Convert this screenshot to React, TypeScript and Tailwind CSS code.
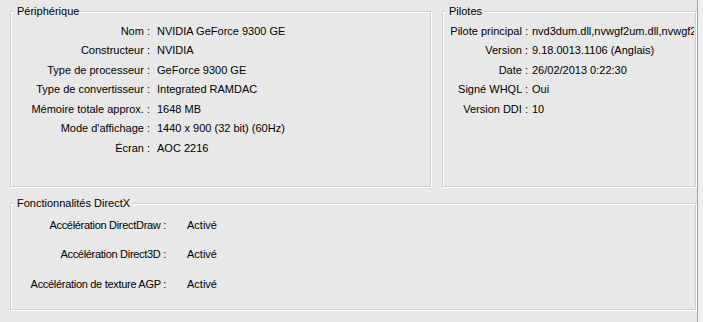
type Row = { label: string; value: string };

const device: Row[] = [
  { label: "Nom", value: "NVIDIA GeForce 9300 GE" },
  { label: "Constructeur", value: "NVIDIA" },
  { label: "Type de processeur", value: "GeForce 9300 GE" },
  { label: "Type de convertisseur", value: "Integrated RAMDAC" },
  { label: "Mémoire totale approx.", value: "1648 MB" },
  { label: "Mode d'affichage", value: "1440 x 900 (32 bit) (60Hz)" },
  { label: "Écran", value: "AOC 2216" },
];

const drivers: Row[] = [
  { label: "Pilote principal", value: "nvd3dum.dll,nvwgf2um.dll,nvwgf2um.dll" },
  { label: "Version", value: "9.18.0013.1106 (Anglais)" },
  { label: "Date", value: "26/02/2013 0:22:30" },
  { label: "Signé WHQL", value: "Oui" },
  { label: "Version DDI", value: "10" },
];

const directx: Row[] = [
  { label: "Accélération DirectDraw", value: "Activé" },
  { label: "Accélération Direct3D", value: "Activé" },
  { label: "Accélération de texture AGP", value: "Activé" },
];

function GroupBox({ title, className, children }: { title: string; className: string; children?: React.ReactNode }) {
  return (
    <div
      className={`relative shrink-0 border border-[#d0d0d0] shadow-[inset_1px_1px_0_#fff,1px_1px_0_#fff] ${className}`}
    >
      <span className="absolute left-[4px] top-[-8px] bg-[#e8e8e8] px-[2px] leading-[14px] whitespace-nowrap">
        {title}
      </span>
      {children}
    </div>
  );
}

function InfoRows({
  rows,
  labelClass,
  gap,
  rowHeight,
}: {
  rows: Row[];
  labelClass: string;
  gap: string;
  rowHeight: string;
}) {
  return (
    <div className="flex flex-col">
      {rows.map((row) => (
        <div key={row.label} className={`flex items-center overflow-hidden whitespace-nowrap ${rowHeight}`}>
          <span className={`shrink-0 text-right ${labelClass}`}>{row.label} :</span>
          <span className={gap}>{row.value}</span>
        </div>
      ))}
    </div>
  );
}

export default function App() {
  return (
    <div className="flex h-[322px] w-[703px] overflow-hidden bg-[#e8e8e8] font-['Liberation_Sans',Arial,sans-serif] text-[11px] text-black">
      <div className="flex flex-1 flex-col gap-[16px] pl-[10px] pt-[11px]">
        <div className="flex gap-[11px]">
          <GroupBox title="Périphérique" className="h-[176px] w-[421px] pt-[9px]">
            <InfoRows rows={device} labelClass="w-[139px]" gap="pl-[7px]" rowHeight="h-[19.5px]" />
          </GroupBox>
          <GroupBox title="Pilotes" className="h-[176px] w-[254px] pt-[9px]">
            <div className="overflow-hidden pr-[1px]">
              <InfoRows rows={drivers} labelClass="w-[85px]" gap="pl-[4px]" rowHeight="h-[19.5px]" />
            </div>
          </GroupBox>
        </div>
        <GroupBox title="Fonctionnalités DirectX" className="h-[107px] w-[686px] pt-[6px]">
          <InfoRows
            rows={directx}
            labelClass="w-[155px] tracking-[-0.3px]"
            gap="pl-[21px]"
            rowHeight="h-[29.5px]"
          />
        </GroupBox>
        <GroupBox title="Remarques" className="h-[80px] w-[686px]" />
      </div>
      <div className="w-[6px] shrink-0 border-l border-[#a0a0a0] bg-[#f0f0f0]" />
    </div>
  );
}
